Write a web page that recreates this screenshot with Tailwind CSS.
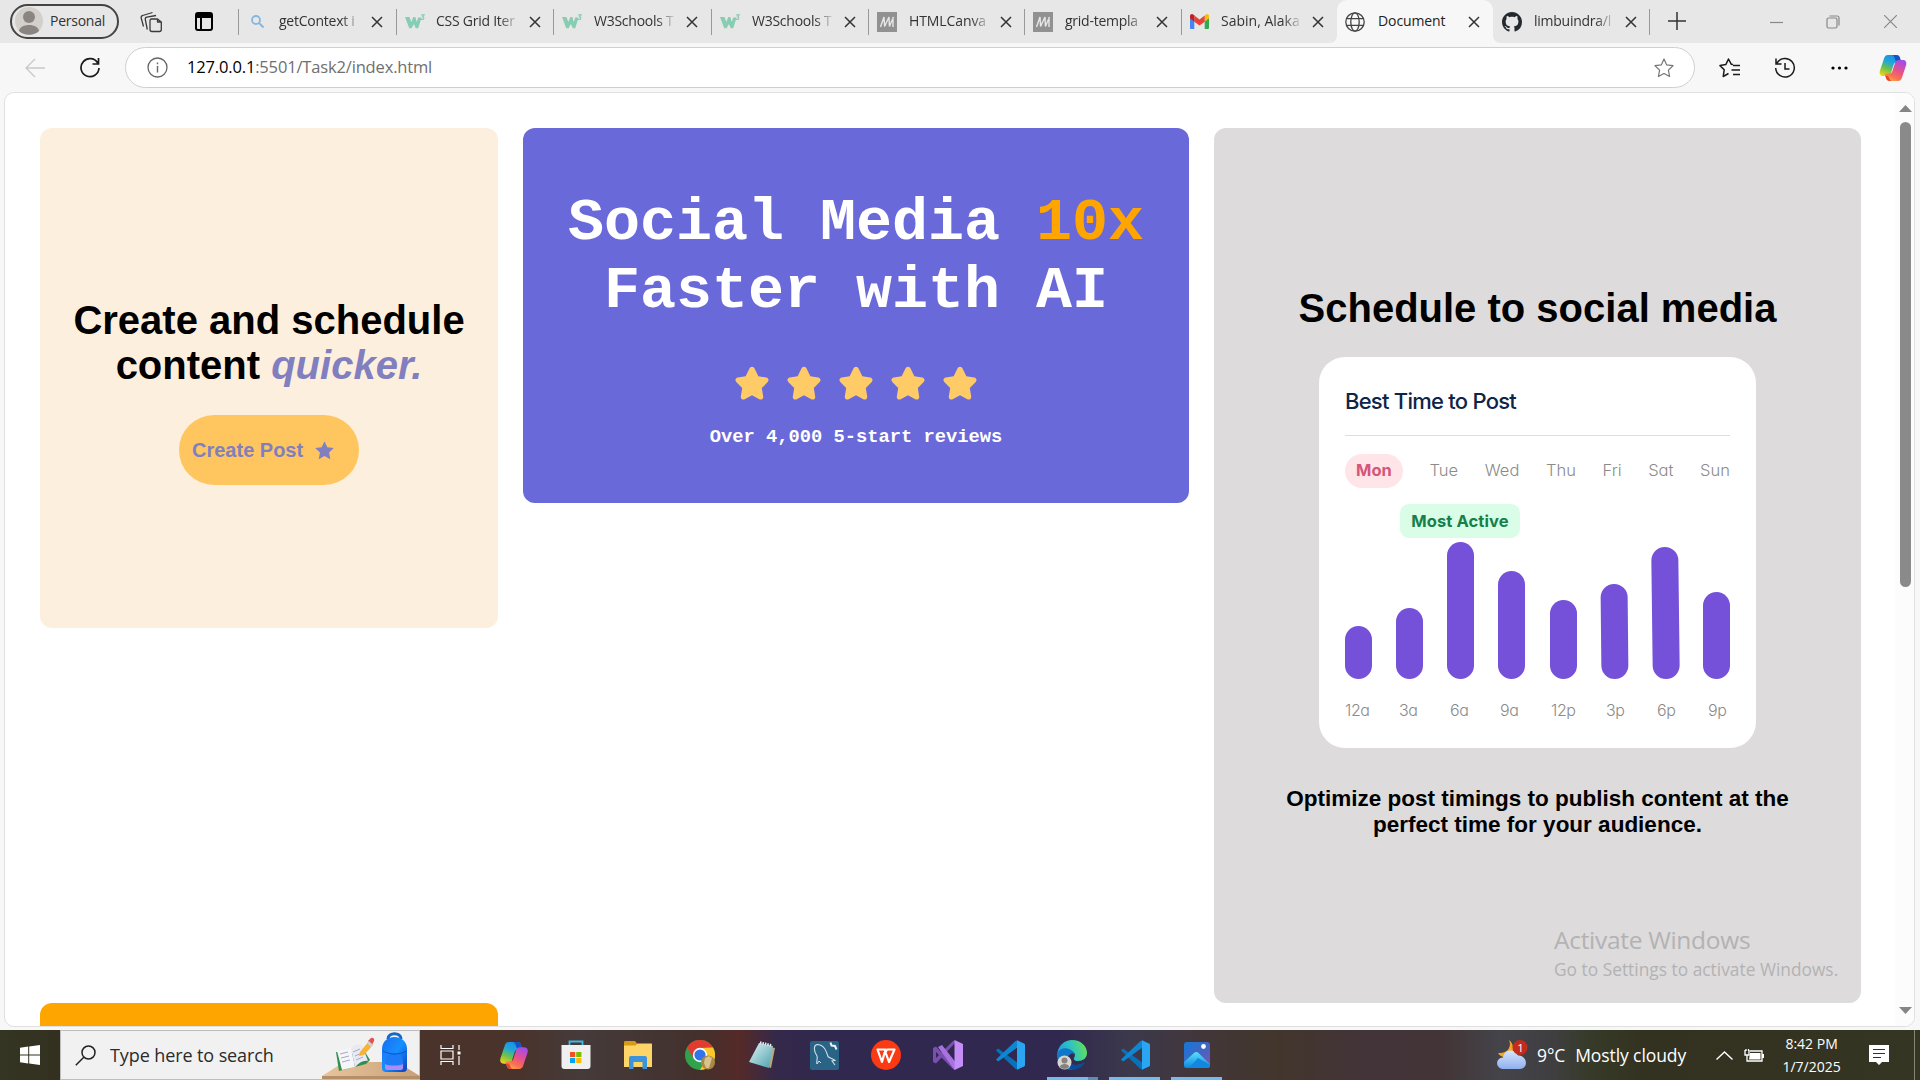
<!DOCTYPE html>
<html lang="en">
<head>
<meta charset="utf-8">
<title>Document</title>
<script src="https://cdn.jsdelivr.net/npm/@tailwindcss/browser@4"></script>
</head>
<body class="flex h-[1080px] w-[1920px] flex-col overflow-hidden bg-[#f7f7f7] font-['Open_Sans','Noto_Sans',sans-serif] text-[#333]">

<!-- shared icon definitions -->
<svg class="absolute h-0 w-0" aria-hidden="true">
  <defs>
    <linearGradient id="cpA" x1="0.6" y1="0" x2="0.2" y2="1"><stop offset="0" stop-color="#1a8fe6"/><stop offset=".35" stop-color="#20a8d8"/><stop offset=".65" stop-color="#6dc14a"/><stop offset="1" stop-color="#f2d21c"/></linearGradient>
    <linearGradient id="cpB" x1="0.8" y1="0" x2="0.3" y2="1"><stop offset="0" stop-color="#ffb04a"/><stop offset=".25" stop-color="#f9714e"/><stop offset=".55" stop-color="#e8508c"/><stop offset="1" stop-color="#a24de8"/></linearGradient>
    <linearGradient id="edgeA" x1="0" y1=".6" x2="1" y2=".4"><stop offset="0" stop-color="#1f9de0"/><stop offset=".5" stop-color="#2fc3c0"/><stop offset="1" stop-color="#62e05a"/></linearGradient>
    <linearGradient id="photo" x1="0" y1="0" x2="1" y2="1"><stop offset="0" stop-color="#1378d8"/><stop offset=".6" stop-color="#4a62c0"/><stop offset="1" stop-color="#8a50b0"/></linearGradient>
    <linearGradient id="photoM" x1="0" y1="0" x2="0" y2="1"><stop offset="0" stop-color="#5fe0fa"/><stop offset="1" stop-color="#0a86e0"/></linearGradient>
    <linearGradient id="pack" x1="0" y1="0" x2="1" y2="1"><stop offset="0" stop-color="#1a6cf0"/><stop offset=".5" stop-color="#1690ff"/><stop offset="1" stop-color="#0a3ec0"/></linearGradient>
    <linearGradient id="desk" x1="0" y1="0" x2="1" y2="0"><stop offset="0" stop-color="#e8c49c"/><stop offset="1" stop-color="#c9a077"/></linearGradient>
    <linearGradient id="cloud" x1="0" y1="0" x2="0" y2="1"><stop offset="0" stop-color="#d6e4fc"/><stop offset="1" stop-color="#8fb0ee"/></linearGradient>
    <linearGradient id="note" x1="0" y1="0" x2="1" y2="1"><stop offset="0" stop-color="#e2f3f5"/><stop offset="1" stop-color="#4aa0ad"/></linearGradient>
    <symbol id="close" viewBox="0 0 12 12"><path d="M1 1l10 10M11 1L1 11" stroke="currentColor" stroke-width="1.5" fill="none"/></symbol>
    <symbol id="w3" viewBox="0 0 20 15"><path d="M0 3h4.500l1.800 5L8.300 3h2l1.500 5 1.400-4.600h3.400L13.200 14.300h-2.400L8.900 10 6.600 14.300H4.200z" fill="#86cdb3"/><path d="M16.200.9h2.900L17.600 2.800c1.600 0 1.800 2.600-.2 2.600-.8 0-1.300-.4-1.300-.4" fill="none" stroke="#86cdb3" stroke-width="1.100"/></symbol>
    <symbol id="mdn" viewBox="0 0 20 20"><path d="M0 0h20v20H0z" fill="#919191"/><path d="M3.500 15L7 5l.6 9.500L12 5l.4 9.500L16.500 5M16 5v10" fill="none" stroke="#e6e6e6" stroke-width="1.400"/></symbol>
    <symbol id="copilot" viewBox="0 0 28 28"><path d="M9 1h8c2.500 0 3.400 1.200 4 3l1.200 4.200H18c-2 0-2.900 1-3.500 3l-2.600 8c-.7 2-1.700 2.800-3.700 2.800H4.500C1.300 22 0 20 1 16.500L5 4.500C5.800 2 7 1 9 1z" fill="url(#cpA)"/><path d="M15 1h2c2.500 0 3.400 1.200 4 3l1.200 4.200H18c-2 0-2-7.200-5-7.200z" fill="#1552c9"/><path d="M9 1h8c2.500 0 3.400 1.200 4 3l1.200 4.200H18c-2 0-2.900 1-3.500 3l-2.600 8c-.7 2-1.700 2.800-3.700 2.800H4.500C1.300 22 0 20 1 16.500L5 4.500C5.800 2 7 1 9 1z" transform="rotate(180 14 14)" fill="url(#cpB)"/><path d="M13 27h-2c-2.500 0-3.400-1.200-4-3l-.8-2.300h2c2 0 2.300 5.300 4.800 5.300z" fill="#e8452c"/></symbol>
    <symbol id="vscode" viewBox="0 0 30 30"><path d="M1 10.500l2.200-2L23 23v6.500L20.500 29z" fill="#0a70b8"/><path d="M1 19.500l2.200 2L23 7V.5L20.500 1z" fill="#0f86d2"/><path d="M22 .3L29 3.500c.6.3 1 .8 1 1.500v20c0 .7-.4 1.200-1 1.500l-7 3.200z" fill="#2aa5f2"/></symbol>
    <symbol id="rstar" viewBox="0 0 34 34"><path d="M17 0.800c1.200 0 2.200.8 2.700 1.900l3.600 7.600 7.900 1.200c2.300.4 3.100 2.900 1.500 4.600l-5.900 6 1.400 8.300c.4 2.300-1.900 3.900-3.900 2.900L17 29.300l-7.300 4c-2 1-4.300-.6-3.900-2.900l1.400-8.300-5.900-6c-1.600-1.700-.8-4.200 1.500-4.600l7.900-1.200 3.600-7.600c.5-1.100 1.500-1.900 2.700-1.900z" fill="currentColor"/></symbol>
  </defs>
</svg>

<!-- tab strip -->
<header class="flex h-[43px] shrink-0 bg-[#e7e7e7] text-[14px] leading-[43px] tracking-[-0.25px]">
  <div class="flex w-[238px] shrink-0 items-center pl-[10px]">
    <div class="mt-[-1px] flex h-[35px] w-[109px] items-center rounded-full border-2 border-[#444] pl-[3px]">
      <svg class="h-[28px] w-[28px]" viewBox="0 0 28 28"><circle cx="14" cy="14" r="14" fill="#d3cfcb"/><circle cx="14" cy="10" r="6" fill="#8a8581"/><path d="M4 24c1-8 19-8 20 0-5 5-15 5-20 0z" fill="#8a8581"/></svg>
      <span class="ml-[7px] mt-[-1px] leading-5">Personal</span>
    </div>
    <svg class="ml-[21px] h-[22px] w-[22px] text-[#3a3a3a]" viewBox="0 0 22 22" fill="none" stroke="currentColor" stroke-width="1.300" stroke-linejoin="round"><path d="M11.500 8h6l3.800 3v7.500a2 2 0 0 1-2 2h-7.300a2 2 0 0 1-2-2v-9A1.500 1.500 0 0 1 11.500 8zM17.500 8v3h3.800M7.300 18.500l-2-10a2 2 0 0 1 1.600-2.300L16 4.500M3.500 15.500L1.200 7a2 2 0 0 1 1.500-2.500L12.500 1.500"/></svg>
    <svg class="ml-[33px] h-[19px] w-[18px]" viewBox="0 0 18 19"><rect x="1" y="1" width="16" height="17" rx="2" fill="none" stroke="#000" stroke-width="2"/><path d="M1 2h16v4H1zM5 6h2v12H5z" fill="#000"/></svg>
  </div>
  <div class="flex w-[158px] items-center">
    <i class="h-[26px] w-px bg-[#999]"></i>
    <svg class="ml-[12px] h-[13px] w-[13px]" viewBox="0 0 13 13"><circle cx="5" cy="5" r="4" fill="none" stroke="#85b7e2" stroke-width="1.800"/><path d="M8 8l4.500 4.500" stroke="#85b7e2" stroke-width="2"/></svg>
    <span class="ml-[15px] mt-[-2px] w-[83px] whitespace-nowrap [mask-image:linear-gradient(90deg,#000_75%,transparent)]">getContext i</span>
    <svg class="ml-[9px] h-[12px] w-[12px]"><use href="#close"/></svg>
  </div>
  <div class="flex w-[157px] items-center">
    <i class="h-[26px] w-px bg-[#999]"></i>
    <svg class="ml-[8px] h-[15px] w-[20px]"><use href="#w3"/></svg>
    <span class="ml-[11px] mt-[-2px] w-[84px] whitespace-nowrap [mask-image:linear-gradient(90deg,#000_75%,transparent)]">CSS Grid Iter</span>
    <svg class="ml-[9px] h-[12px] w-[12px]"><use href="#close"/></svg>
  </div>
  <div class="flex w-[158px] items-center">
    <i class="h-[26px] w-px bg-[#999]"></i>
    <svg class="ml-[8px] h-[15px] w-[20px]"><use href="#w3"/></svg>
    <span class="ml-[12px] mt-[-2px] w-[83px] whitespace-nowrap [mask-image:linear-gradient(90deg,#000_75%,transparent)]">W3Schools T</span>
    <svg class="ml-[9px] h-[12px] w-[12px]"><use href="#close"/></svg>
  </div>
  <div class="flex w-[157px] items-center">
    <i class="h-[26px] w-px bg-[#999]"></i>
    <svg class="ml-[8px] h-[15px] w-[20px]"><use href="#w3"/></svg>
    <span class="ml-[12px] mt-[-2px] w-[83px] whitespace-nowrap [mask-image:linear-gradient(90deg,#000_75%,transparent)]">W3Schools T</span>
    <svg class="ml-[9px] h-[12px] w-[12px]"><use href="#close"/></svg>
  </div>
  <div class="flex w-[156px] items-center">
    <i class="h-[26px] w-px bg-[#999]"></i>
    <svg class="ml-[8px] h-[20px] w-[20px]"><use href="#mdn"/></svg>
    <span class="ml-[12px] mt-[-2px] w-[83px] whitespace-nowrap tracking-[-0.1px] [mask-image:linear-gradient(90deg,#000_75%,transparent)]">HTMLCanva</span>
    <svg class="ml-[8px] h-[12px] w-[12px]"><use href="#close"/></svg>
  </div>
  <div class="flex w-[157px] items-center">
    <i class="h-[26px] w-px bg-[#999]"></i>
    <svg class="ml-[8px] h-[20px] w-[20px]"><use href="#mdn"/></svg>
    <span class="ml-[12px] mt-[-2px] w-[82px] whitespace-nowrap [mask-image:linear-gradient(90deg,#000_75%,transparent)]">grid-templa</span>
    <svg class="ml-[9px] h-[12px] w-[12px]"><use href="#close"/></svg>
  </div>
  <div class="flex w-[156px] items-center">
    <i class="h-[26px] w-px bg-[#999]"></i>
    <svg class="ml-[8px] h-[15px] w-[19px]" viewBox="0 0 19 15"><path d="M0 3v10.500C0 14.500.5 15 1.300 15H4.300V6z" fill="#4285f4"/><path d="M19 3v10.500c0 1-.5 1.500-1.300 1.500h-3V6z" fill="#34a853"/><path d="M14.700 2.200V7.700L19 4.300V2c0-1.800-2-2.600-3.300-1.500z" fill="#fbbc04"/><path d="M4.300 7.700V1.500L9.500 5.400l5.200-3.900v6.200L9.500 11.500z" fill="#ea4335"/><path d="M0 2v2.300l4.300 3.400V1.500L3.300.5C2-.6 0 .2 0 2z" fill="#c5221f"/></svg>
    <span class="ml-[12px] mt-[-2px] w-[82px] whitespace-nowrap tracking-[0px] [mask-image:linear-gradient(90deg,#000_75%,transparent)]">Sabin, Alaka</span>
    <svg class="ml-[9px] h-[12px] w-[12px]"><use href="#close"/></svg>
  </div>
  <div class="relative flex w-[156px] items-center rounded-t-[10px] bg-[#f7f7f7]">
    <svg class="absolute bottom-0 left-[-8px] h-2 w-2" viewBox="0 0 8 8"><path d="M8 0v8H0c5 0 8-3 8-8z" fill="#f7f7f7"/></svg>
    <svg class="absolute right-[-8px] bottom-0 h-2 w-2" viewBox="0 0 8 8"><path d="M0 0v8h8C3 8 0 5 0 0z" fill="#f7f7f7"/></svg>
    <svg class="ml-[8px] h-[20px] w-[20px]" viewBox="0 0 20 20" fill="none" stroke="#444" stroke-width="1.300"><circle cx="10" cy="10" r="9.200"/><ellipse cx="10" cy="10" rx="4.200" ry="9.200"/><path d="M1.500 6.700h17M1.500 13.300h17"/></svg>
    <span class="ml-[13px] mt-[-2px] w-[81px] tracking-[-0.1px] text-[#222]">Document</span>
    <svg class="ml-[9px] h-[12px] w-[12px]"><use href="#close"/></svg>
  </div>
  <div class="flex w-[156px] items-center">
    <svg class="ml-[9px] h-[20px] w-[20px]" viewBox="0 0 16 16"><path fill="#24292f" d="M8 0C3.580 0 0 3.580 0 8c0 3.540 2.290 6.530 5.470 7.590.4.070.55-.17.55-.38 0-.19-.01-.82-.01-1.490-2.010.37-2.530-.49-2.690-.94-.09-.23-.48-.94-.82-1.130-.28-.15-.68-.52-.01-.53.630-.01 1.080.58 1.230.82.720 1.210 1.870.87 2.330.66.070-.52.280-.87.510-1.070-1.780-.2-3.640-.89-3.640-3.950 0-.87.310-1.590.82-2.150-.08-.2-.36-1.020.08-2.120 0 0 .67-.21 2.200.82.640-.18 1.320-.27 2-.27s1.360.09 2 .27c1.530-1.040 2.200-.82 2.200-.82.440 1.100.16 1.920.08 2.120.51.560.82 1.270.82 2.150 0 3.070-1.870 3.750-3.650 3.950.290.25.540.73.540 1.480 0 1.070-.01 1.930-.01 2.200 0 .21.150.46.550.38A8.010 8.010 0 0 0 16 8c0-4.420-3.580-8-8-8z"/></svg>
    <span class="ml-[12px] mt-[-2px] w-[82px] whitespace-nowrap [mask-image:linear-gradient(90deg,#000_75%,transparent)]">limbuindra/l</span>
    <svg class="ml-[9px] h-[12px] w-[12px]"><use href="#close"/></svg>
  </div>
  <div class="flex flex-1 items-center">
    <i class="h-[26px] w-px bg-[#999]"></i>
    <svg class="ml-[18px] mt-[-1px] h-[18px] w-[18px]" viewBox="0 0 18 18"><path d="M9 0v18M0 9h18" stroke="#333" stroke-width="1.500"/></svg>
    <svg class="ml-[84px] h-[14px] w-[14px]" viewBox="0 0 14 14"><path d="M0 7.500h13" stroke="#888" stroke-width="1.200"/></svg>
    <svg class="ml-[42px] h-[14px] w-[14px]" viewBox="0 0 14 14" fill="none" stroke="#888" stroke-width="1.200"><rect x="1" y="3" width="10" height="10" rx="1.500"/><path d="M3.500 1h7.500a2 2 0 0 1 2 2v7.500"/></svg>
    <svg class="ml-[44px] h-[13px] w-[13px]" viewBox="0 0 13 13"><path d="M0 0l13 13M13 0L0 13" stroke="#888" stroke-width="1.200"/></svg>
  </div>
</header>

<!-- toolbar -->
<nav class="flex h-[49px] shrink-0 items-center">
  <svg class="ml-[25px] h-[20px] w-[20px]" viewBox="0 0 20 20" fill="none" stroke="#c9c9c9" stroke-width="1.400"><path d="M20 10H1M10 1L1 10l9 9"/></svg>
  <svg class="ml-[35px] h-[21px] w-[20px]" viewBox="0 0 20 21" fill="none" stroke="#1a1a1a" stroke-width="1.700"><path d="M18 6.500A9 9 0 1 0 19 11M18.500 1v6h-6"/></svg>
  <div class="ml-[25px] flex h-[41px] w-[1570px] items-center rounded-full border border-[#cfcfcf] bg-white pl-[21px] pr-[20px]">
    <svg class="h-[21px] w-[21px]" viewBox="0 0 21 21"><circle cx="10.500" cy="10.500" r="9.500" fill="none" stroke="#666" stroke-width="1.300"/><path d="M10.500 9v6.500M10.500 5.500v1.800" stroke="#666" stroke-width="1.400"/></svg>
    <span class="ml-[19px] text-[16.5px] tracking-[-0.16px] text-[#6f6f6f]"><span class="text-black">127.0.0.1</span>:5501/Task2/index.html</span>
    <svg class="ml-auto h-[20px] w-[20px]" viewBox="0 0 20 20" fill="none" stroke="#777" stroke-width="1.200" stroke-linejoin="round"><path d="M10 1l2.700 5.900 6.300.8-4.600 4.400 1.200 6.400L10 15.400l-5.600 3.100 1.200-6.400L1 7.700l6.300-.8z"/></svg>
  </div>
  <svg class="ml-[24px] h-[20px] w-[22px]" viewBox="0 0 22 20" fill="none" stroke="#1a1a1a" stroke-width="1.500" stroke-linejoin="round"><path d="M14 6.500l-1.800-.3L9.500 1 6.800 6.600 1 7.600l4.200 4.200-1 6.700L9.500 15.500M14 7.500h7M12.500 12h8.500M14 16.500h7"/></svg>
  <svg class="ml-[33px] h-[22px] w-[22px]" viewBox="0 0 22 22" fill="none" stroke="#1a1a1a" stroke-width="1.500"><path d="M3 6a9.300 9.300 0 1 1-1.300 5M2 1.500V7h5.500M11 6v6h4.500"/></svg>
  <svg class="ml-[35px] h-[4px] w-[17px]" viewBox="0 0 17 4"><circle cx="2" cy="2" r="1.600"/><circle cx="8.500" cy="2" r="1.600"/><circle cx="15" cy="2" r="1.600"/></svg>
  <svg class="ml-[31px] h-[28px] w-[28px]"><use href="#copilot"/></svg>
</nav>

<!-- page viewport -->
<main class="ml-[4px] flex h-[935px] w-[1911px] shrink-0 overflow-hidden rounded-[10px] border border-[#e0e0e0] bg-white font-['Liberation_Sans',Arial,sans-serif] font-bold text-black">
  <div class="flex flex-1 items-start gap-[25px] pl-[35px] pt-[35px]">
    <div class="flex w-[458px] flex-col gap-[375px]">
      <section class="flex h-[500px] flex-col items-center rounded-[12px] bg-[#fdefde] pt-[170px] text-center">
        <h2 class="text-[40px] leading-[45px]">Create and schedule<br>content <em class="text-[#817fbf]">quicker.</em></h2>
        <button class="mt-[27px] flex h-[70px] w-[180px] items-center rounded-[35px] bg-[#ffc65f] pl-[13px] text-[20px] text-[#817fbf]">
          Create Post
          <svg class="ml-[12px] h-[19px] w-[19px]" viewBox="0 0 20 20"><path d="M10 .2l3 6.300 6.800.9-5 4.700 1.300 7L10 15.800l-6.100 3.300 1.300-7-5-4.700L7 6.500z" fill="currentColor"/></svg>
        </button>
      </section>
      <section class="h-[300px] rounded-[12px] bg-[#ffa500]"></section>
    </div>
    <section class="flex h-[375px] w-[666px] flex-col items-center rounded-[12px] bg-[#6a69da] pt-[61px] text-center font-['Liberation_Mono','Courier_New',monospace] text-white">
      <h1 class="text-[60px] leading-[68px]">Social Media <span class="text-[#ffa500]">10x</span><br>Faster with AI</h1>
      <div class="mt-[41px] flex gap-[18px] text-[#ffcb66]">
        <svg class="h-[34px] w-[34px]"><use href="#rstar"/></svg>
        <svg class="h-[34px] w-[34px]"><use href="#rstar"/></svg>
        <svg class="h-[34px] w-[34px]"><use href="#rstar"/></svg>
        <svg class="h-[34px] w-[34px]"><use href="#rstar"/></svg>
        <svg class="h-[34px] w-[34px]"><use href="#rstar"/></svg>
      </div>
      <p class="mt-[27px] text-[18.75px] leading-[21px]">Over 4,000 5-start reviews</p>
    </section>
    <section class="relative flex h-[875px] w-[647px] flex-col items-center rounded-[12px] bg-[#dddbdc] pt-[158px] text-center">
      <h2 class="text-[40px] leading-[45px]">Schedule to social media</h2>
      <div class="mt-[26px] flex h-[391px] w-[437px] flex-col rounded-[26px] bg-white px-[26px] pt-[30px] text-left font-['Inter',sans-serif] text-[16.5px] font-light text-[#8b8b8b] [font-feature-settings:'cv11','ss03']">
        <h3 class="text-[22px] font-medium leading-[28px] tracking-[-0.75px] text-[#0f2547]">Best Time to Post</h3>
        <div class="mt-[20px] h-px bg-[#dcdfe2]"></div>
        <div class="mt-[17px] flex h-[34px] items-center justify-between pt-px">
          <span class="flex h-[34px] w-[58px] items-center justify-center rounded-full bg-[#ffe4e8] font-bold text-[#d4567a]">Mon</span>
          <span>Tue</span><span>Wed</span><span>Thu</span><span>Fri</span><span>Sat</span><span>Sun</span>
        </div>
        <div class="ml-[55px] mt-[17px] flex h-[34px] w-[120px] items-center justify-center rounded-[9px] bg-[#d9fde6] pt-px font-bold tracking-[0.1px] text-[#168048]">Most Active</div>
        <div class="mt-[4px] flex h-[137px] items-end justify-between">
          <i class="h-[53px] w-[27px] rounded-full bg-[#7551d9]"></i>
          <i class="h-[71px] w-[27px] rounded-full bg-[#7551d9]"></i>
          <i class="h-[137px] w-[27px] rounded-full bg-[#7551d9]"></i>
          <i class="h-[108px] w-[27px] rounded-full bg-[#7551d9]"></i>
          <i class="h-[79px] w-[27px] rounded-full bg-[#7551d9]"></i>
          <i class="h-[95px] w-[27px] rotate-[-0.6deg] rounded-full bg-[#7551d9]"></i>
          <i class="h-[132px] w-[27px] rotate-[-0.7deg] rounded-full bg-[#7551d9]"></i>
          <i class="h-[87px] w-[27px] rounded-full bg-[#7551d9]"></i>
        </div>
        <div class="mt-[21px] grid grid-cols-[54px_51px_50px_51px_55px_51px_51px_22px] text-[16px] leading-[20px] tracking-[-0.4px]">
          <span>12a</span><span>3a</span><span>6a</span><span>9a</span><span>12p</span><span>3p</span><span>6p</span><span>9p</span>
        </div>
      </div>
      <p class="mt-[38px] text-[22.5px] leading-[26px]">Optimize post timings to publish content at the<br>perfect time for your audience.</p>
      <!-- system watermark over the page -->
      <div class="absolute left-[340px] top-[795px] whitespace-nowrap text-left font-['Open_Sans','Noto_Sans',sans-serif] font-normal text-[#b3b2b3]">
        <div class="text-[24.5px] leading-[34px] tracking-[-0.3px]">Activate Windows</div>
        <div class="mt-px text-[17.3px] leading-[24px] tracking-[0.03px]">Go to Settings to activate Windows.</div>
      </div>
    </section>
  </div>
  <aside class="flex w-[19px] flex-col items-center bg-[#fcfcfc] pb-[12px] pl-[2px] pt-[12px]">
    <svg class="h-[7px] w-[13px]" viewBox="0 0 13 7"><path d="M6.500 0L13 7H0z" fill="#858585"/></svg>
    <div class="mt-[10px] h-[465px] w-[11px] rounded-full bg-[#8a8a8a]"></div>
    <svg class="mt-auto h-[7px] w-[13px]" viewBox="0 0 13 7"><path d="M6.500 7L13 0H0z" fill="#858585"/></svg>
  </aside>
</main>

<!-- taskbar -->
<footer class="mt-[3px] flex h-[50px] shrink-0 items-center bg-[linear-gradient(90deg,#353524_0px,#33301f_60px,#4a332b_420px,#4a332c_520px,#453b3a_580px,#43302c_700px,#552a28_740px,#35294a_775px,#30284e_830px,#30284e_1060px,#3c394b_1130px,#42363a_1200px,#42362c_1280px,#42343a_1370px,#433436_1440px,#44444a_1500px,#3f3f42_1550px,#363a28_1590px,#33311f_1650px,#353524_1920px)] text-white">
  <svg class="ml-[20px] h-[20px] w-[20px]" viewBox="0 0 20 20"><path d="M0 2.800l8.200-1.200v7.900H0zM9.200 1.400L20 0v9.500H9.200zM0 10.500h8.200v7.900L0 17.200zM9.200 10.500H20V20L9.200 18.600z" fill="#fff"/></svg>
  <div class="ml-[20px] flex h-[50px] w-[360px] items-center border border-[#bdbdbd] bg-[#f1f1f1]">
    <svg class="ml-[14px] h-[21px] w-[21px]" viewBox="0 0 21 21" fill="none" stroke="#222" stroke-width="1.500"><circle cx="13.500" cy="7.500" r="6.500"/><path d="M8.800 12.200L.8 20.300"/></svg>
    <span class="ml-[14px] text-[18px] tracking-[-0.1px] text-[#2b2b2b]">Type here to search</span>
    <svg class="ml-auto mr-[-1px] h-[48px] w-[98px]" viewBox="0 0 98 48">
      <path d="M0 45l22-14h53l23 14z" fill="url(#desk)"/><path d="M0 45h98v3H0z" fill="#b58f68"/>
      <path d="M14 21l3 19 27-7 4-4-5-8z" fill="#2f8f4c"/><path d="M15 20l14-3 4 19-13 3z" fill="#f5f5fa"/><path d="M29 17c3-4 7-4 11-3l6 16c-5-1-9 2-13 6z" fill="#e9e9f4"/>
      <path d="M18 23l8-2M19 27l8-2M20 31l8-2M31 21l7-3M33 25l7-3M34 29l7-3" stroke="#a9a9c4" stroke-width="1"/>
      <path d="M38 21l9-11 4 4-9 10-5 1z" fill="#f9b233"/><path d="M46 10l3-3c2-1 4 1 3 3l-2 4z" fill="#e8504a"/><path d="M45 12l2-2 4 4-2 2z" fill="#c9d3dc"/>
      <path d="M66 8c0-7 13-7 13 0" fill="none" stroke="#1368c8" stroke-width="3"/><path d="M60 18c0-16 25-16 25 0v19c0 3-2 4-4 4H64c-2 0-4-1-4-4z" fill="url(#pack)"/><path d="M63 31c0-12 18-12 18 0v6H63z" fill="#1d7bf7"/><path d="M63 33c4 2 14 2 18 0v4c0 1-1 2-2 2H65c-1 0-2-1-2-2z" fill="#a88df5"/><path d="M61 20c7 4 16 4 24 0" fill="none" stroke="#0c50cf" stroke-width="1"/>
    </svg>
  </div>
  <svg class="ml-[20px] h-[20px] w-[21px]" viewBox="0 0 21 20" fill="none" stroke="#fff" stroke-width="1.200"><path d="M1 0v3.500h12V0M1 20v-3.500h12V20M1 6h12v8H1zM19 0v5M19 11v9"/><path d="M17.500 6.500h3v3h-3z" fill="#fff" stroke="none"/></svg>
  <div class="ml-[22px] flex h-full items-center">
    <div class="flex w-[62px] justify-center"><svg class="h-[29px] w-[30px]" viewBox="0 0 28 28"><use href="#copilot"/></svg></div>
    <div class="flex w-[62px] justify-center"><svg class="h-[30px] w-[30px]" viewBox="0 0 30 30"><path d="M8.500 6V1.500h13V6" fill="none" stroke="#3fb8e8" stroke-width="1.800"/><path d="M.5 5h29v21c0 2-1 3-3 3h-23c-2 0-3-1-3-3z" fill="#f0f0f0"/><path d="M9 12h5.200v5H9z" fill="#f25022"/><path d="M15.200 12h5.200v5h-5.200z" fill="#7fba00"/><path d="M9 18h5.200v5H9z" fill="#00a4ef"/><path d="M15.200 18h5.200v5h-5.200z" fill="#ffb900"/></svg></div>
    <div class="flex w-[62px] justify-center"><svg class="h-[28px] w-[28px]" viewBox="0 0 28 28"><path d="M0 1.500C0 .7.500 0 1.500 0H11l2.500 3H28v8H0z" fill="#d99a12"/><path d="M0 4.500h11.500l2-2H27c.6 0 1 .4 1 1V26H0z" fill="#fcd468"/><path d="M5 28V17c0-1.300.8-2 2-2h14c1.200 0 2 .7 2 2v11h-4.500v-7h-9v7z" fill="#3d93db"/></svg></div>
    <div class="flex w-[62px] justify-center"><svg class="h-[30px] w-[30px]" viewBox="0 0 30 30"><circle cx="15" cy="15" r="15" fill="#31a24c"/><path d="M2 7.500A15 15 0 0 1 28 7.500L15 8 8.900 18.500z" fill="#e23b30"/><path d="M28 7.500A15 15 0 0 1 15 30l6.500-11.500L15 8z" fill="#fcc72b"/><circle cx="15" cy="15" r="7.200" fill="#fff"/><circle cx="15" cy="15" r="5.600" fill="#2f74e8"/><circle cx="23" cy="22.500" r="7" fill="#a98745"/><path d="M20 18l4-2 3 2-3 10h-3l-2-5z" fill="#d9c28c"/></svg></div>
    <div class="flex w-[62px] justify-center"><svg class="h-[28px] w-[28px]" viewBox="0 0 28 28"><path d="M12 4l15 3-4 20-5-2z" fill="#b9a67c"/><path d="M11 2l14 3-4 22L1 21z" fill="url(#note)"/><path d="M12 1.500l12 3" stroke="#e7eef0" stroke-width="2.500" stroke-dasharray="1.500 1"/></svg></div>
    <div class="flex w-[62px] justify-center"><svg class="h-[29px] w-[29px]" viewBox="0 0 29 29"><rect width="29" height="29" rx="2" fill="#296385"/><path d="M7 23c-1-3 1-5 0-8C3 9 4 4 7 3.500c7 0 9 6 11 12 2 2 5 2 7 4l-3 .5 3 4" fill="none" stroke="#d4e2ea" stroke-width="1.100"/><path d="M7 23l2-3 2 2" fill="none" stroke="#d4e2ea" stroke-width="1"/><path d="M20.500 1.500l1 3 3.500.5 1.500 3.500" fill="none" stroke="#eef4f7" stroke-width="2"/></svg></div>
    <div class="flex w-[62px] justify-center"><svg class="h-[30px] w-[30px]" viewBox="0 0 30 30"><circle cx="15" cy="15" r="15" fill="#fb3a14"/><path d="M6.500 9.500h8L11 22zM13.500 9.500L18 22l5.500-12.500h-7.500l-2.500 5" fill="none" stroke="#fff" stroke-width="2.200" stroke-linejoin="round"/></svg></div>
    <div class="flex w-[62px] justify-center"><svg class="h-[30px] w-[30px]" viewBox="0 0 30 30"><path d="M0 8l3-1.500L22 27v2.500l-2-.5L3 12v7l-3 3z" fill="#7a4fb0"/><path d="M0 22l3 1.500L22 3V.5L20 1 0 21z" fill="#7a4fb0"/><path d="M5 7l4-2L24 24l-2.500 6z" fill="#a873e0"/><path d="M21.500 0L30 4v22l-8.500 4z" fill="#c48df8"/></svg></div>
    <div class="flex w-[62px] justify-center"><svg class="h-[30px] w-[30px]"><use href="#vscode"/></svg></div>
    <div class="relative flex h-[50px] w-[62px] items-center justify-center"><svg class="h-[30px] w-[30px]" viewBox="0 0 30 30"><path d="M0 15C1 5 8 0 15 0c9 0 15 6 15 13 0 5-4 8-9 8-4 0-5-2-3.500-4 2-4-3-7-7-6-5 1-9 4-9 9z" fill="url(#edgeA)"/><path d="M0 15c1-6 7-8 12-6 3 1 5 3 6 5-4-2-8 2-7 6 1 5 8 7 16 3-4 6-12 8-18 6C3 26 0 21 0 15z" fill="#1276c8"/><path d="M11 19c0 6 9 8 17 3-3 6-8 8-13 8-4-2-6-7-4-11z" fill="#0c4b98"/><circle cx="7.500" cy="22.500" r="7" fill="#d8d5d2"/><circle cx="7.500" cy="20.500" r="3" fill="#86827e"/><path d="M2.800 27c.5-4 9-4 9.400 0-2.500 2.500-7 2.500-9.400 0z" fill="#86827e"/></svg><i class="absolute bottom-0 left-[6px] h-[3px] w-[51px] border-r-[10px] border-[#5d8bb8] bg-[#76b9ed]"></i></div>
    <div class="relative flex h-[50px] w-[62px] items-center justify-center"><svg class="ml-px h-[30px] w-[30px]"><use href="#vscode"/></svg><i class="absolute bottom-0 left-[6px] h-[3px] w-[51px] bg-[#76b9ed]"></i></div>
    <div class="relative flex h-[50px] w-[62px] items-center justify-center"><svg class="ml-px h-[26px] w-[26px]" viewBox="0 0 26 26"><rect width="26" height="26" rx="3" fill="url(#photo)"/><path d="M0 20l10-9c1.500-1.500 3-1.500 4.500 0L26 22v1c0 2-1 3-3 3H3c-2 0-3-1-3-3z" fill="url(#photoM)"/><path d="M14 16l-9 10h18c2 0 3-1 3-3z" fill="#1287e0"/><circle cx="19.500" cy="4.500" r="2.400" fill="#fff"/></svg><i class="absolute bottom-0 left-[6px] h-[3px] w-[51px] bg-[#76b9ed]"></i></div>
  </div>
  <svg class="ml-[270px] h-[30px] w-[31px]" viewBox="0 0 31 30"><path d="M12 0c3 6-1 14-11 13 2 4 7 5 11 3 5-2 6-12 0-16z" fill="#f5a524"/><path d="M7 29c-9 0-9-11-1-11.500C7 9 18 8 21 15.500c8-1 12 12 2 13.500z" fill="url(#cloud)"/><circle cx="23" cy="7.500" r="7.500" fill="#c42b1c"/><text x="20.300" y="11.500" font-size="11.500" fill="#fff" font-family="Open Sans">1</text></svg>
  <span class="ml-[9px] text-[17.5px] tracking-[-0.1px]">9°C</span>
  <span class="ml-[10px] text-[17.5px] tracking-[-0.1px]">Mostly cloudy</span>
  <svg class="ml-[30px] h-[9px] w-[17px]" viewBox="0 0 17 9"><path d="M.5 8.500l8-7.500 8 7.500" fill="none" stroke="#fff" stroke-width="1.400"/></svg>
  <svg class="ml-[11px] h-[13px] w-[20px]" viewBox="0 0 20 13"><path d="M1 1v5h4V1M3 6v6h15V2H6M2 0v2M4.500 0v2" fill="none" stroke="#fff" stroke-width="1.300"/><path d="M6 4h10.500v6.500H5z" fill="#fff"/><path d="M18 5h2v4h-2z" fill="#fff"/></svg>
  <div class="ml-[16px] w-[63px] text-center text-[14px] leading-[23px]">8:42 PM<br>1/7/2025</div>
  <svg class="ml-[26px] h-[20px] w-[20px]" viewBox="0 0 20 20"><path d="M0 0h20v17h-7l-3 3-3-3H0z" fill="#fff"/><path d="M4 4.500h12M4 8.500h12M4 12.500h8" stroke="#34331f" stroke-width="1.200"/></svg>
  <i class="ml-auto mr-[5px] h-full w-px bg-[#85857a]"></i>
</footer>
</body>
</html>
